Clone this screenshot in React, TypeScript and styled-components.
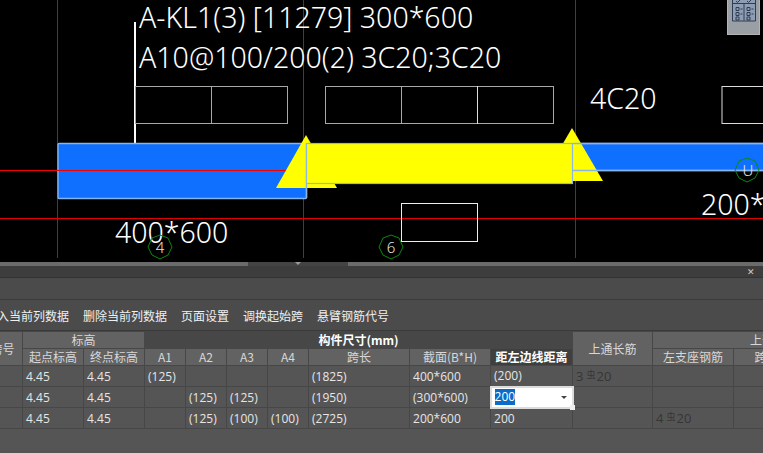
import styled, { createGlobalStyle } from "styled-components";

const GlobalStyle = createGlobalStyle`
  html, body {
    margin: 0;
    padding: 0;
    background: #000;
    overflow: hidden;
  }
`;

const Page = styled.div`
  width: 763px;
  height: 453px;
  display: flex;
  flex-direction: column;
  overflow: hidden;
  font-family: "Open Sans", "Noto Sans CJK SC", sans-serif;
`;

const Canvas = styled.div`
  position: relative;
  height: 262px;
  flex: none;
  background: #000;
  overflow: hidden;
`;

const Drawing = styled.svg`
  display: block;
`;

const CadLabel = styled.text`
  fill: #fff;
  font-family: "Noto Sans", "Open Sans", sans-serif;
  font-size: 28.5px;
  font-weight: 300;
`;

const AxisLabel = styled.text`
  fill: #e8e8e8;
  font-family: "Noto Sans", sans-serif;
  font-size: 15px;
  font-weight: 300;
  text-anchor: middle;
`;

const ViewCube = styled.div`
  position: absolute;
  top: 0;
  right: 3px;
  width: 33px;
  height: 35px;
  display: flex;
  align-items: flex-start;
  justify-content: center;
  background: #9a9fa6;
  border-right: 1px solid #b4b4b4;
  border-bottom: 1px solid #b4b4b4;
  border-left: 1px solid #b4b4b4;
  box-sizing: border-box;
`;

const Splitter = styled.div`
  height: 4px;
  flex: none;
  display: flex;
  background: #6b6b6b;
`;

const SplitterGrip = styled.div`
  width: 100px;
  margin-left: 248px;
  display: flex;
  justify-content: center;
  background: #444;
`;

const GripArrow = styled.div`
  width: 0;
  height: 0;
  border-left: 3px solid transparent;
  border-right: 3px solid transparent;
  border-top: 3px solid #9a9a9a;
`;

const Panel = styled.div`
  flex: 1;
  display: flex;
  flex-direction: column;
  background: #555;
  overflow: hidden;
`;

const TitleBar = styled.div`
  height: 12px;
  flex: none;
  display: flex;
  align-items: center;
  justify-content: flex-end;
  padding-right: 8px;
  background: #3d3d3d;
  border-bottom: 1px solid #333;
  box-sizing: border-box;
  color: #cfcfcf;
  font-size: 9px;
  line-height: 1;
`;

const EmptyBar = styled.div`
  height: 22px;
  flex: none;
  background: #4b4b4b;
  border-bottom: 1px solid #3a3a3a;
  box-sizing: border-box;
`;

const Toolbar = styled.div`
  height: 31px;
  flex: none;
  display: flex;
  align-items: center;
  gap: 14px;
  margin-left: -15px;
  background: #4b4b4b;
  border-bottom: 1px solid #3a3a3a;
  box-sizing: border-box;
  padding-top: 1px;
`;

const ToolItem = styled.span`
  flex: none;
  color: #f0f0f0;
  font-size: 12px;
  font-family: "Noto Sans CJK SC", sans-serif;
  white-space: nowrap;
`;

const Grid = styled.table`
  flex: none;
  table-layout: fixed;
  width: 913px;
  margin-left: -18px;
  border-collapse: collapse;
  font-size: 12px;
`;

const HeadCell = styled.th<{ $tone?: "group" | "active" }>`
  height: 16px;
  padding: 0;
  overflow: hidden;
  white-space: nowrap;
  text-align: center;
  font-family: "Noto Sans CJK SC", sans-serif;
  font-size: 12px;
  line-height: 14px;
  font-weight: ${(p) => (p.$tone ? 700 : 400)};
  color: ${(p) => (p.$tone ? "#fff" : "#d8d8d8")};
  background: ${(p) =>
    p.$tone === "group" ? "#474747" : p.$tone === "active" ? "#3f3f3f" : "#626262"};
  border: 1px solid #474747;
`;

const Cell = styled.td<{ $dim?: boolean }>`
  height: 21px;
  padding: 0 0 0 3px;
  overflow: hidden;
  white-space: nowrap;
  box-sizing: border-box;
  color: ${(p) => (p.$dim ? "#363636" : "#e6e6e6")};
  background: #555;
  border: 1px solid #474747;
  font-size: ${(p) => (p.$dim ? 13 : 12)}px;
`;

const EditCell = styled.td`
  position: relative;
  height: 21px;
  padding: 0 0 0 3px;
  box-sizing: border-box;
  background: #fff;
  border: 2px solid #dcdcdc;
  font-size: 12px;
`;

const EditRow = styled.div`
  display: flex;
  align-items: center;
  justify-content: space-between;
  padding-right: 5px;
`;

const SelectedText = styled.span`
  background: #0a6cc8;
  color: #fff;
  line-height: 16px;
`;

const DropArrow = styled.span`
  width: 0;
  height: 0;
  border-left: 3px solid transparent;
  border-right: 3px solid transparent;
  border-top: 3px solid #444;
`;

const FillHandle = styled.span`
  position: absolute;
  right: -3px;
  bottom: -3px;
  width: 5px;
  height: 5px;
  background: #eee;
`;

const RebarMark = styled.span`
  font-family: "Noto Sans CJK SC", sans-serif;
  font-size: 9px;
  margin: 0 1px 0 3px;
  vertical-align: 3px;
`;

const columnWidths = [40, 61, 61, 41, 41, 41, 41, 101, 81, 82, 80, 81, 90, 72];

type Row = {
  start: string;
  end: string;
  a: string[];
  span: string;
  section: string;
  offset: string | null;
  top: string | null;
  left: string | null;
};

const rows: Row[] = [
  { start: "4.45", end: "4.45", a: ["(125)", "", "", ""], span: "(1825)", section: "400*600", offset: "(200)", top: "3", left: null },
  { start: "4.45", end: "4.45", a: ["", "(125)", "(125)", ""], span: "(1950)", section: "(300*600)", offset: null, top: null, left: null },
  { start: "4.45", end: "4.45", a: ["", "(125)", "(100)", "(100)"], span: "(2725)", section: "200*600", offset: "200", top: null, left: "4" },
];

function Rebar({ count }: { count: string }) {
  return (
    <>
      {count}
      <RebarMark>虫</RebarMark>20
    </>
  );
}

export default function App() {
  return (
    <Page>
      <GlobalStyle />
      <Canvas>
        <Drawing width="763" height="262" viewBox="0 0 763 262">
          <g stroke="#d40000" strokeWidth="1">
            <line x1="57.5" y1="0" x2="57.5" y2="258" />
            <line x1="303.5" y1="0" x2="303.5" y2="258" />
            <line x1="575.5" y1="0" x2="575.5" y2="258" />
          </g>
          <line x1="0" y1="218.5" x2="763" y2="218.5" stroke="#e00000" />
          <line x1="135" y1="22" x2="135" y2="143" stroke="#fff" strokeWidth="2" />
          <g fill="none" stroke="#a8a8a8">
            <rect x="135.5" y="86.5" width="152" height="37" />
            <line x1="211.5" y1="86" x2="211.5" y2="124" />
            <rect x="325.5" y="86.5" width="228" height="37" />
            <line x1="401.5" y1="86" x2="401.5" y2="124" />
            <line x1="477.5" y1="86" x2="477.5" y2="124" stroke="#ddd" />
            <rect x="722" y="86.5" width="60" height="37" stroke="#ddd" />
            <rect x="401.5" y="203.5" width="76" height="38" stroke="#eee" />
          </g>

          <rect x="58" y="143.5" width="248.5" height="55" rx="1" fill="#0f6fff" stroke="#86b4ec" strokeWidth="1.4" />
          <line x1="58" y1="170.5" x2="290" y2="170.5" stroke="#f00000" />
          <line x1="0" y1="170.5" x2="58" y2="170.5" stroke="#f00000" />
          <polygon points="306,135 337,188 276,188" fill="#ffff00" />
          <line x1="306.5" y1="143" x2="306.5" y2="198" stroke="#8fb4d8" strokeWidth="1.4" />
          <rect x="573" y="143.5" width="195" height="27" fill="#0f6fff" stroke="#86b4ec" strokeWidth="1.4" />
          <polygon points="572,128 603,181 541,181" fill="#ffff00" />
          <rect x="306.5" y="143.5" width="266" height="40" fill="#ffff00" stroke="#8fb8e0" strokeWidth="1.2" />
          <line x1="573" y1="143.5" x2="763" y2="143.5" stroke="#86b4ec" strokeWidth="1.4" />
          <line x1="573" y1="170.5" x2="763" y2="170.5" stroke="#86b4ec" strokeWidth="1.4" />

          <CadLabel x="139" y="28">A-KL1(3) [11279] 300*600</CadLabel>
          <CadLabel x="139" y="68">A10@100/200(2) 3C20;3C20</CadLabel>
          <CadLabel x="590" y="109">4C20</CadLabel>
          <CadLabel x="115" y="243">400*600</CadLabel>
          <CadLabel x="701" y="215">200*</CadLabel>

          <g fill="none" stroke="#0a8a0a">
            <polygon points="160,235 168,238 172,247 168,255 160,259 152,255 148,247 152,238" />
            <polygon points="391,235 399,238 403,247 399,255 391,259 383,255 379,247 383,238" />
            <polygon points="747,158 755,161 759,170 755,178 747,182 739,178 735,170 739,161" />
          </g>
          <AxisLabel x="160" y="253">4</AxisLabel>
          <AxisLabel x="391" y="253">6</AxisLabel>
          <AxisLabel x="748" y="176">U</AxisLabel>
        </Drawing>
        <ViewCube>
          <svg width="26" height="22" viewBox="0 0 26 22" fill="none" stroke="#2f3d52" strokeWidth="1">
            <path d="M1.5 0v21h23V0" fill="#8d9db3" />
            <path d="M1.5 3.5h23M13 3.5v17" />
            <path d="M5 1l1.5 1.5L9 0M16 1l1.5 1.5L20 0" />
            <path d="M5 7.5h3v3H5zM5 12.5h3v3H5zM5 17h3v3H5zM16 7.5h3v3h-3zM16 12.5h3v3h-3zM16 17h3v3h-3zM9.5 9h2M9.5 14h2M20.5 9h2M20.5 14h2" />
          </svg>
        </ViewCube>
      </Canvas>
      <Splitter>
        <SplitterGrip>
          <GripArrow />
        </SplitterGrip>
      </Splitter>
      <Panel>
        <TitleBar>✕</TitleBar>
        <EmptyBar />
        <Toolbar>
          <ToolItem>插入当前列数据</ToolItem>
          <ToolItem>删除当前列数据</ToolItem>
          <ToolItem>页面设置</ToolItem>
          <ToolItem>调换起始跨</ToolItem>
          <ToolItem>悬臂钢筋代号</ToolItem>
        </Toolbar>
        <Grid>
          <colgroup>
            {columnWidths.map((w, i) => (
              <col key={i} style={{ width: w }} />
            ))}
          </colgroup>
          <thead>
            <tr>
              <HeadCell rowSpan={2}>跨号</HeadCell>
              <HeadCell colSpan={2}>标高</HeadCell>
              <HeadCell colSpan={7} $tone="group">构件尺寸(mm)</HeadCell>
              <HeadCell rowSpan={2}>上通长筋</HeadCell>
              <HeadCell colSpan={3}>上部钢筋</HeadCell>
            </tr>
            <tr>
              <HeadCell>起点标高</HeadCell>
              <HeadCell>终点标高</HeadCell>
              <HeadCell>A1</HeadCell>
              <HeadCell>A2</HeadCell>
              <HeadCell>A3</HeadCell>
              <HeadCell>A4</HeadCell>
              <HeadCell>跨长</HeadCell>
              <HeadCell>截面(B*H)</HeadCell>
              <HeadCell $tone="active">距左边线距离</HeadCell>
              <HeadCell>左支座钢筋</HeadCell>
              <HeadCell>跨中钢筋</HeadCell>
              <HeadCell>右支座钢筋</HeadCell>
            </tr>
          </thead>
          <tbody>
            {rows.map((row, i) => (
              <tr key={i}>
                <Cell>{i + 1}</Cell>
                <Cell>{row.start}</Cell>
                <Cell>{row.end}</Cell>
                {row.a.map((v, j) => (
                  <Cell key={j}>{v}</Cell>
                ))}
                <Cell>{row.span}</Cell>
                <Cell>{row.section}</Cell>
                {row.offset === null ? (
                  <EditCell>
                    <EditRow>
                      <SelectedText>200</SelectedText>
                      <DropArrow />
                    </EditRow>
                    <FillHandle />
                  </EditCell>
                ) : (
                  <Cell>{row.offset}</Cell>
                )}
                <Cell $dim>{row.top && <Rebar count={row.top} />}</Cell>
                <Cell $dim>{row.left && <Rebar count={row.left} />}</Cell>
                <Cell />
                <Cell />
              </tr>
            ))}
          </tbody>
        </Grid>
      </Panel>
    </Page>
  );
}
